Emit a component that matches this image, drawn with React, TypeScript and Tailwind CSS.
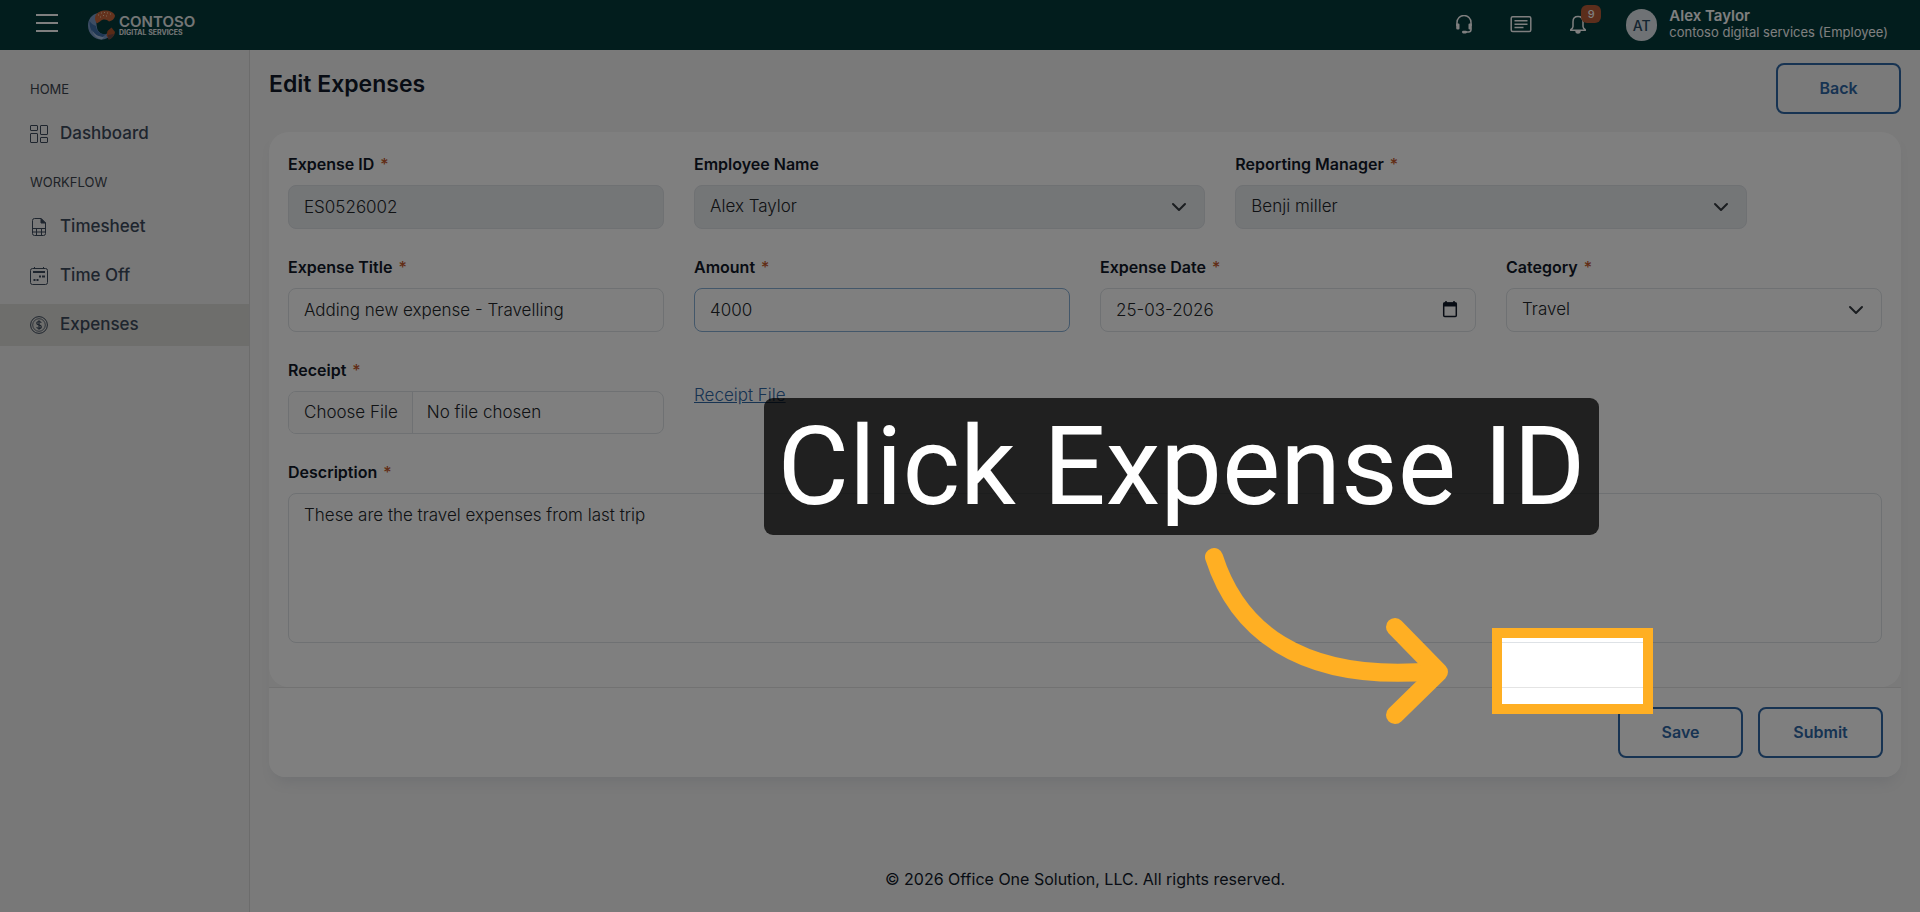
import React from 'react';

interface FieldProps {
  id: string;
  label: string;
  required?: boolean;
  className?: string;
  children: React.ReactNode;
}

const CONTROL = 'block w-full h-11 rounded-lg border px-[15px] text-[17px] font-light text-[#212529] outline-none';

const Field: React.FC<FieldProps> = ({ id, label, required, className = '', children }) => (
  <div className={className}>
    <label htmlFor={id} className="flex h-6 items-center gap-[6px] mb-[9px] text-[16px] font-semibold text-[#101828]">
      {label}
      {required && <span className="font-medium text-[#c4582a]">*</span>}
    </label>
    {children}
  </div>
);

const Chevron = () => (
  <svg className="absolute right-[18px] top-[14px] w-4 h-4 pointer-events-none" viewBox="0 0 16 16" fill="none" stroke="#343a40" strokeWidth="2" strokeLinecap="round" strokeLinejoin="round">
    <path d="m2 5 6 6 6-6" />
  </svg>
);

const SelectBox: React.FC<{ id: string; value: string; disabled?: boolean }> = ({ id, value, disabled }) => (
  <div className="relative">
    <select
      id={id}
      disabled={disabled}
      defaultValue={value}
      className={`${CONTROL} appearance-none opacity-100 border-[#dee2e6] ${disabled ? 'bg-[#e9ecef]' : 'bg-white'}`}
    >
      <option>{value}</option>
    </select>
    <Chevron />
  </div>
);

const DashboardIcon = () => (
  <svg className="w-[18px] h-[18px]" viewBox="0 0 18 18" fill="none" stroke="currentColor">
    <rect x="0.5" y="0.5" width="7" height="5" rx="0.5" />
    <rect x="10.5" y="0.5" width="7" height="9" rx="0.5" />
    <rect x="0.5" y="8.5" width="7" height="9" rx="0.5" />
    <rect x="10.5" y="12.5" width="7" height="5" rx="0.5" />
  </svg>
);

const TimesheetIcon = () => (
  <svg className="w-[18px] h-[18px]" viewBox="0 0 18 18" fill="none" stroke="currentColor">
    <path d="M11 0.5H4.5a2 2 0 0 0-2 2v13a2 2 0 0 0 2 2h9a2 2 0 0 0 2-2V5z" />
    <path d="M11 0.5V5h4.5z" fill="currentColor" />
    <path d="M2.5 10.5h13M2.5 14h13M6.5 10.5v7M11.5 10.5v7" />
  </svg>
);

const TimeOffIcon = () => (
  <svg className="w-[18px] h-[18px]" viewBox="0 0 18 18" fill="none" stroke="currentColor">
    <rect x="0.5" y="1.5" width="17" height="16" rx="2" />
    <path d="M4.5 0v2M13.5 0v2" />
    <path d="M3 5h12" strokeWidth="2" />
    <path d="M9 9.5h2M12 9.5h3M3.5 13h2M6.5 13h2" strokeWidth="2" />
  </svg>
);

const ExpensesIcon = () => (
  <svg className="w-[18px] h-[18px]" viewBox="0 0 18 18" fill="none" stroke="currentColor">
    <circle cx="9" cy="9" r="8.4" />
    <circle cx="9" cy="9" r="6.3" strokeWidth="0.8" />
    <path d="M11.2 6.8C10.9 5.9 10 5.500 9 5.500c-1.200 0-2.200.6-2.200 1.700 0 2.300 4.500 1.200 4.500 3.600 0 1.100-1.100 1.700-2.300 1.700-1.100 0-2-.5-2.300-1.400M9 4.300v9.400" strokeWidth="1.2" />
  </svg>
);

const MENU = [
  { title: 'HOME', items: [{ name: 'Dashboard', icon: DashboardIcon, active: false }] },
  {
    title: 'WORKFLOW',
    items: [
      { name: 'Timesheet', icon: TimesheetIcon, active: false },
      { name: 'Time Off', icon: TimeOffIcon, active: false },
      { name: 'Expenses', icon: ExpensesIcon, active: true }
    ]
  }
];

const Logo = () => (
  <a href="#home" className="flex items-center gap-[3px] text-[#e8ecec]" aria-label="Contoso Digital Services">
    <svg className="w-7 h-[30px]" viewBox="0 0 28 30">
      <path d="M11 3C3 4 0 10 0 15.500 0 24 7 30 14 29.500c3 0 6-1.500 7.500-3-1-1-2-2-2-3-5 2-10-1-10.500-6C8 12 8 7 11 3z" fill="#7a9bc9" />
      <path d="M1.500 11c-.5 9 5 15.500 13 16l4-3c-6 1-10-3-10.500-8C5 15 3 13 1.500 11z" fill="#3f6fa8" />
      <path d="M4 20c3 5 7 7 12 7l-2 2.500C9 29 5.500 25 4 20z" fill="#a9c0de" />
      <path d="M7.500 5.500C10 1 15 0 19 .5c4 .5 8 3 8 5.500-.5 3-3 5-6 5.500-2-2-6-3-9 0-1.500 1-2.500 2-3.500 1.500-1.500-2-2-5-1-7.500z" fill="#c9673c" />
      <path d="M10 5h1M13 3h1M16 2.500h1M19 3h1M22 4h1M12 7h1M15 5.500h1M18 6h1" stroke="#f2d2b5" strokeWidth="1" />
      <path d="M19.500 21l4-3.500L27 22c-.5 3.500-2.500 6-6 7.500l-2.500-4z" fill="#b3562f" />
      <path d="M20 25l6-1c-1 3-3 5-5.500 5.500z" fill="#6f4a48" />
    </svg>
    <span className="flex flex-col">
      <span className="text-[15px] leading-[15px] font-semibold">CONTOSO</span>
      <span className="text-[7px] leading-[7px] font-bold">DIGITAL SERVICES</span>
    </span>
  </a>
);

const Header = () => (
  <header className="flex items-center justify-between h-[50px] bg-[#043a3b] pl-9 pr-8 text-white">
    <div className="flex items-center gap-[30px]">
      <button aria-label="Toggle menu" className="flex flex-col gap-[6px] w-[22px] -mt-1">
        <span className="h-[2px] w-full bg-white"></span>
        <span className="h-[2px] w-full bg-white"></span>
        <span className="h-[2px] w-full bg-white"></span>
      </button>
      <Logo />
    </div>

    <div className="flex items-center">
      <button aria-label="Support" className="mr-9">
        <svg className="w-5 h-5" viewBox="0 0 20 20" fill="none" stroke="currentColor" strokeWidth="1.5">
          <path d="M3 11V7.500a7 7 0 0 1 14 0V11" />
          <path d="M2.200 8.500h2.300a1 1 0 0 1 1 1v4a1 1 0 0 1-1 1H3.500a1.300 1.300 0 0 1-1.300-1.300zM17.800 8.500h-2.300a1 1 0 0 0-1 1v4a1 1 0 0 0 1 1h1a1.300 1.300 0 0 0 1.300-1.300z" fill="currentColor" stroke="none" />
          <path d="M17 13.500v1a2.500 2.500 0 0 1-2.500 2.500H12" />
          <rect x="8" y="15.800" width="5" height="2.600" rx="1.300" fill="currentColor" stroke="none" />
        </svg>
      </button>
      <button aria-label="Messages" className="mr-9">
        <svg className="w-[22px] h-5" viewBox="0 0 22 20" fill="none" stroke="currentColor" strokeWidth="1.5">
          <rect x="1.200" y="1.800" width="19.600" height="14.800" rx="1.500" />
          <path d="M4.500 5.800h13M4.500 9.200h13M4.500 12.500h9" />
        </svg>
      </button>
      <button aria-label="Notifications" className="relative mr-[38px]">
        <svg className="w-5 h-5" viewBox="0 0 20 20" fill="none" stroke="currentColor" strokeWidth="1.5">
          <path d="M10 1.500c-3.200 0-5 2.300-5 5.200v4.800c0 1.300-.8 2.200-2.200 3.200v.6h14.400v-.6c-1.400-1-2.200-1.900-2.200-3.200V6.700c0-2.900-1.800-5.200-5-5.200z" />
          <path d="M7.300 16h5.400a2.700 2.700 0 0 1-5.400 0z" fill="currentColor" stroke="none" />
        </svg>
        <span className="absolute -top-[10px] left-[13px] flex items-center justify-center w-5 h-[18px] rounded-md bg-[#b85c38] text-[11px] font-medium">9</span>
      </button>
      <div className="flex items-center gap-3">
        <span className="flex items-center justify-center w-[31px] h-8 rounded-full bg-[#dfe5ea] text-[14px] font-medium text-[#2a4a63]">AT</span>
        <div className="-mt-1">
          <div className="text-[15px] leading-[17px] font-semibold">Alex Taylor</div>
          <div className="text-[13px] leading-4 font-normal">contoso digital services (Employee)</div>
        </div>
      </div>
    </div>
  </header>
);

const Sidebar = () => (
  <nav className="w-[250px] shrink-0 border-r border-[#d8d8d8] bg-[#f0f0f0] pt-[29px]">
    {MENU.map((group) => (
      <div key={group.title} className="mb-[17px]">
        <h2 className="mb-[14px] pl-[30px] text-[13px] leading-5 text-[#3d454e]">{group.title}</h2>
        <ul className="flex flex-col gap-[7px]">
          {group.items.map((item) => (
            <li key={item.name}>
              <a
                href={`#${item.name.toLowerCase().replace(' ', '-')}`}
                className={`flex items-center gap-3 h-[42px] pl-[30px] text-[17px] font-medium text-[#3d4a5c] ${item.active ? 'bg-[#dcdcd8]' : ''}`}
              >
                <item.icon />
                {item.name}
              </a>
            </li>
          ))}
        </ul>
      </div>
    ))}
  </nav>
);

const OutlineButton: React.FC<{ children: string }> = ({ children }) => (
  <button className="w-[125px] h-[51px] rounded-lg border-2 border-[#2f67a5] pb-[2px] text-[16px] font-semibold text-[#2f67a5]">{children}</button>
);

const ExpenseForm = () => (
  <form onSubmit={(e) => e.preventDefault()} className="rounded-b-[16px] bg-[#f4f4f4] shadow-[0_10px_14px_-6px_rgba(100,116,139,0.15)]">
    <div className="grid grid-cols-12 gap-x-[30px] gap-y-[26px] rounded-[20px] bg-white px-[19px] pt-5 pb-[44px]">
      <Field id="expense-id" label="Expense ID" required className="col-span-3">
        <input id="expense-id" readOnly defaultValue="ES0526002" className={`${CONTROL} border-[#dee2e6] bg-[#e9ecef]`} />
      </Field>
      <Field id="employee" label="Employee Name" className="col-span-4">
        <SelectBox id="employee" value="Alex Taylor" disabled />
      </Field>
      <Field id="manager" label="Reporting Manager" required className="col-span-4">
        <SelectBox id="manager" value="Benji miller" disabled />
      </Field>

      <Field id="title" label="Expense Title" required className="col-span-3 col-start-1">
        <input id="title" defaultValue="Adding new expense - Travelling" className={`${CONTROL} border-[#dee2e6]`} />
      </Field>
      <Field id="amount" label="Amount" required className="col-span-3">
        <input id="amount" defaultValue="4000" className={`${CONTROL} border-[#86aed4]`} />
      </Field>
      <Field id="date" label="Expense Date" required className="col-span-3">
        <div className="relative">
          <input id="date" defaultValue="25-03-2026" className={`${CONTROL} border-[#dee2e6]`} />
          <button type="button" aria-label="Open calendar" className="absolute right-[18px] top-[13px]">
            <svg className="w-4 h-[17px]" viewBox="0 0 16 17" fill="none" stroke="#101828" strokeWidth="1.5">
              <rect x="1.700" y="2" width="12.600" height="13.500" rx="1" />
              <path d="M1.500 3.500h13" strokeWidth="4" />
              <path d="M4 0v3M12 0v3" />
            </svg>
          </button>
        </div>
      </Field>
      <Field id="category" label="Category" required className="col-span-3">
        <SelectBox id="category" value="Travel" />
      </Field>

      <Field id="receipt" label="Receipt" required className="col-span-3">
        <input
          id="receipt"
          type="file"
          className="block w-full h-[43px] overflow-hidden rounded-lg border border-[#dee2e6] text-[17px] font-light text-[#212529] file:mr-[14px] file:h-[41px] file:border-0 file:border-r file:border-solid file:border-[#dee2e6] file:bg-[#fbfbfb] file:pl-[15px] file:pr-[14px] file:font-light"
        />
      </Field>
      <div className="col-span-3 pt-[25px]">
        <a href="#receipt-file" className="text-[17px] leading-6 font-light text-[#2f67a5] underline">Receipt File</a>
      </div>

      <Field id="description" label="Description" required className="col-span-12">
        <textarea
          id="description"
          defaultValue="These are the travel expenses from last trip"
          className="block w-full h-[150px] resize-none rounded-lg border border-[#dee2e6] px-[15px] py-[9px] text-[17px] leading-6 font-light text-[#212529] outline-none"
        />
      </Field>
    </div>
    <div className="flex justify-end gap-[15px] rounded-b-[16px] border-t border-[#e4e4e4] bg-white px-[18px] pt-[19px] pb-[19px]">
      <OutlineButton>Save</OutlineButton>
      <OutlineButton>Submit</OutlineButton>
    </div>
  </form>
);

// Walkthrough step: dims the page around the target and points at it
const Walkthrough = () => (
  <div className="fixed inset-0 overflow-hidden pointer-events-none">
    <div className="absolute left-[1492px] top-[628px] w-[161px] h-[86px] border-[10px] border-[#ffaf23] shadow-[0_0_0_3000px_rgba(0,0,0,0.5)]"></div>
    <div className="absolute left-[764px] top-[398px] w-[835px] h-[137px] flex items-center justify-center rounded-[9px] bg-black/75 whitespace-nowrap font-['Roboto','Liberation_Sans',sans-serif] text-[110px] leading-none text-white">
      Click Expense ID
    </div>
    <svg className="absolute left-[1200px] top-[540px] w-[260px] h-[200px]" viewBox="0 0 260 200" fill="none" stroke="#ffaf23" strokeWidth="18" strokeLinecap="round" strokeLinejoin="round">
      <path d="M14 17C36 86 96 144 236 131" />
      <path d="M195 87L239 132L195 175" />
    </svg>
  </div>
);

export default function App() {
  return (
    <div className="flex flex-col min-h-screen bg-[#f4f4f4] font-['Inter','Liberation_Sans',sans-serif]">
      <Header />
      <div className="flex flex-1">
        <Sidebar />
        <main className="flex flex-col flex-1 min-w-0 px-[19px] pt-[13px]">
          <div className="flex items-start justify-between mb-[18px]">
            <h1 className="pt-[5px] text-[23px] leading-8 font-semibold text-[#101828]">Edit Expenses</h1>
            <OutlineButton>Back</OutlineButton>
          </div>
          <ExpenseForm />
          <footer className="mt-auto pb-[21px] text-center text-[16px] leading-6 text-[#101828]">
            © 2026 Office One Solution, LLC. All rights reserved.
          </footer>
        </main>
      </div>
      <Walkthrough />
    </div>
  );
}
